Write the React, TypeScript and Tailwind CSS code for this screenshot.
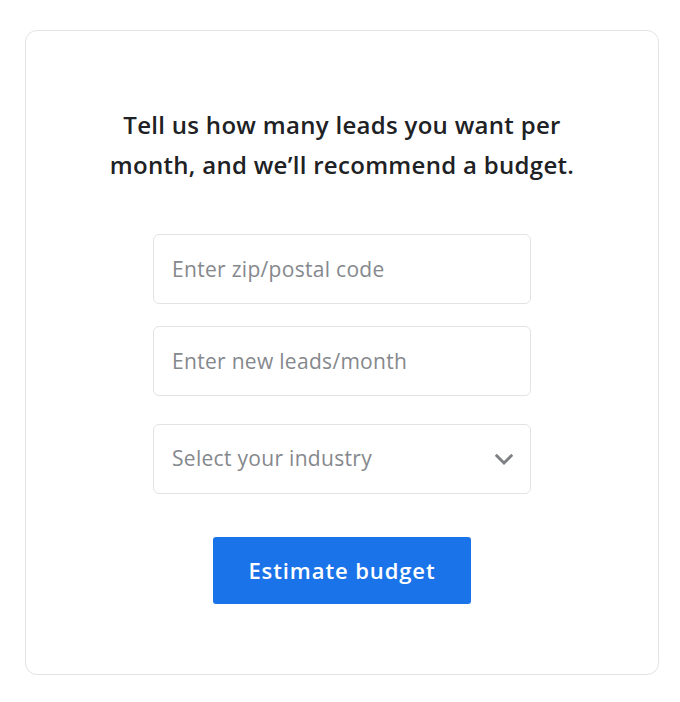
const font = { fontFamily: '"Open Sans", Roboto, sans-serif' };

function Field({ placeholder }: { placeholder: string }) {
  return (
    <input
      type="text"
      placeholder={placeholder}
      className="h-[70px] w-full rounded-md border border-[#e3e3e3] bg-white px-[18px] text-[21px] tracking-[0.3px] text-[#3c4043] outline-none placeholder:text-[#85888c]"
    />
  );
}

export default function App() {
  return (
    <div className="min-h-screen bg-white pt-[30px] pl-[25px]" style={font}>
      <div className="flex h-[645px] w-[634px] flex-col items-center rounded-xl border border-[#e3e3e3] pt-[74px]">
        <h1 className="w-[490px] text-center text-[24px] font-semibold leading-[40px] tracking-[0.3px] text-[#202124]">
          Tell us how many leads you want per month, and we’ll recommend a budget.
        </h1>
        <div className="mt-[49px] flex w-[378px] flex-col gap-[22px]">
          <Field placeholder="Enter zip/postal code" />
          <Field placeholder="Enter new leads/month" />
          <div className="mt-[6px] flex h-[70px] items-center justify-between rounded-md border border-[#e3e3e3] bg-white pl-[18px] pr-[17px]">
            <span className="text-[21px] tracking-[0.3px] text-[#85888c]">Select your industry</span>
            <svg width="18" height="11" viewBox="0 0 18 11" fill="none">
              <polyline points="1.8,1.8 9,9 16.2,1.8" stroke="#7d7f82" strokeWidth="2.8" strokeLinecap="square" />
            </svg>
          </div>
        </div>
        <button className="mt-[43px] h-[67px] w-[258px] rounded-[3px] bg-[#1a73e8] text-[22px] font-semibold tracking-[0.9px] text-white">
          Estimate budget
        </button>
      </div>
    </div>
  );
}
